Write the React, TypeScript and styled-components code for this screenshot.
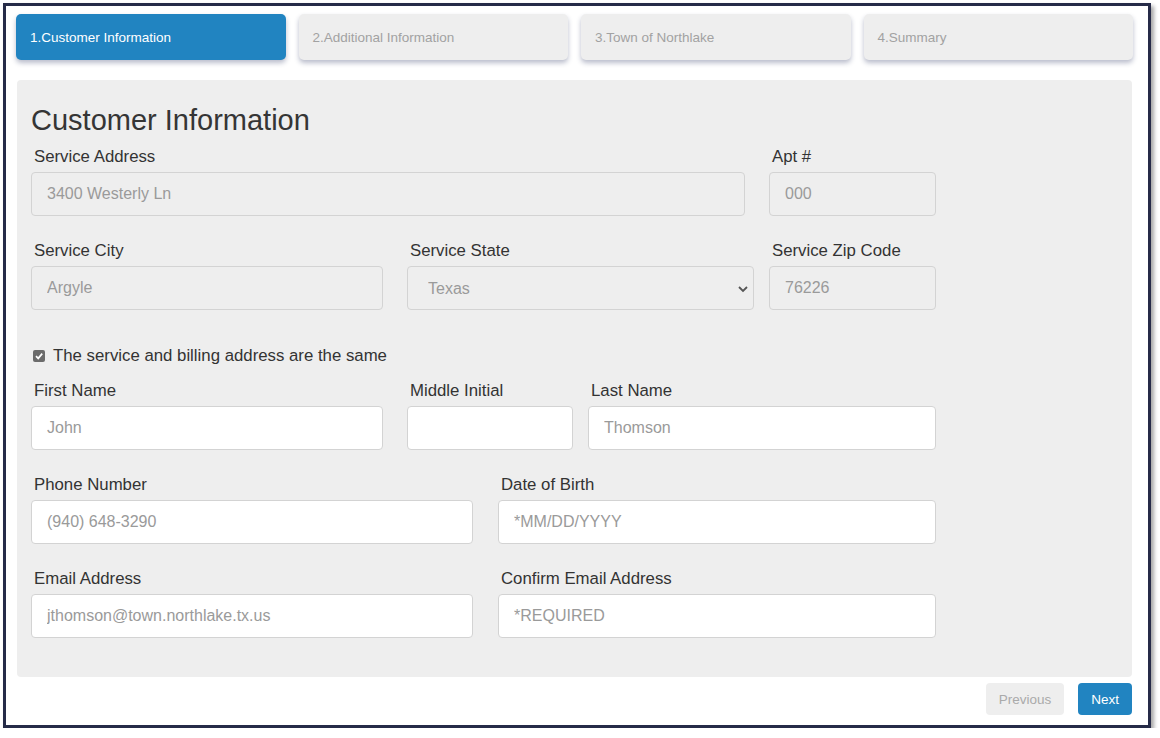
import React from "react";
import styled, { createGlobalStyle } from "styled-components";

const Global = createGlobalStyle`
  html, body { margin: 0; padding: 0; background: #ffffff; }
  body { font-family: "Liberation Sans", Arial, sans-serif; }
  * { box-sizing: border-box; }
`;

const Frame = styled.div`
  position: relative;
  margin: 3px 0 0 3px;
  width: 1148px;
  height: 725px;
  border: 3px solid #262b48;
  background: #ffffff;
  box-shadow: 3px 3px 4px rgba(0, 0, 0, 0.35);
  padding: 8px 15px 0 10px;
  display: flex;
  flex-direction: column;
`;

const Tabs = styled.div`
  display: grid;
  grid-template-columns: repeat(4, 1fr);
  column-gap: 13px;
`;

const Tab = styled.div<{ $active?: boolean }>`
  height: 46px;
  border-radius: 5px;
  display: flex;
  align-items: center;
  padding-left: 14px;
  font-size: 13.5px;
  background: ${(p) => (p.$active ? "#2184c1" : "#eeeeee")};
  color: ${(p) => (p.$active ? "#ffffff" : "#a2a2a2")};
  box-shadow: 0 3px 5px rgba(40, 50, 95, 0.32);
`;

const Panel = styled.div`
  margin: 20px 1px 0 1px;
  background: #eeeeee;
  border-radius: 4px;
  padding: 24px 14px 39px 14px;
`;

const Heading = styled.h2`
  margin: 0 0 11px 0;
  font-weight: 400;
  font-size: 29px;
  line-height: 32px;
  color: #353535;
`;

const Row = styled.div<{ $mt?: number }>`
  display: flex;
  align-items: flex-start;
  margin-top: ${(p) => p.$mt ?? 0}px;
`;

const Field = styled.div<{ $w: number; $ml?: number }>`
  width: ${(p) => p.$w}px;
  margin-left: ${(p) => p.$ml ?? 0}px;
  display: flex;
  flex-direction: column;
  flex-shrink: 0;
`;

const Label = styled.label`
  display: block;
  font-size: 16.8px;
  line-height: 20px;
  color: #333333;
  padding-left: 3px;
  margin-bottom: 5px;
`;

const Input = styled.input<{ $disabled?: boolean }>`
  width: 100%;
  height: 44px;
  border: 1px solid #d3d3d3;
  border-radius: 4px;
  padding: 0 15px;
  font-family: "Liberation Sans", Arial, sans-serif;
  font-size: 16px;
  color: #9a9a9a;
  background: ${(p) => (p.$disabled ? "#eeeeee" : "#ffffff")};
  outline: none;
  &::placeholder { color: #9a9a9a; opacity: 1; }
`;

const SelectWrap = styled.div`
  position: relative;
  width: 100%;
`;

const Select = styled.select`
  width: 100%;
  height: 44px;
  border: 1px solid #d3d3d3;
  border-radius: 4px;
  padding: 0 0 0 20px;
  font-family: "Liberation Sans", Arial, sans-serif;
  font-size: 16px;
  color: #9a9a9a;
  background: #eeeeee;
  appearance: none;
  -webkit-appearance: none;
  outline: none;
`;

const Chevron = styled.svg`
  position: absolute;
  right: 4px;
  top: 18px;
  pointer-events: none;
`;

const CheckRow = styled.div`
  display: flex;
  align-items: center;
  height: 20px;
  margin-top: 36px;
  padding-left: 2px;
  font-size: 16.8px;
  color: #333333;
`;

const CheckBox = styled.span`
  width: 12px;
  height: 12px;
  border-radius: 2px;
  background: #6b6b6b;
  display: inline-flex;
  align-items: center;
  justify-content: center;
  margin-right: 8px;
`;

const Footer = styled.div`
  display: flex;
  justify-content: flex-end;
  gap: 14px;
  margin: 6px 1px 0 0;
`;

const Button = styled.button<{ $primary?: boolean }>`
  height: 32px;
  padding: 0 13px;
  border: none;
  border-radius: 4px;
  font-family: "Liberation Sans", Arial, sans-serif;
  font-size: 13.5px;
  background: ${(p) => (p.$primary ? "#2184c1" : "#eeeeee")};
  color: ${(p) => (p.$primary ? "#ffffff" : "#aaaaaa")};
  cursor: pointer;
`;

export default function App() {
  return (
    <>
      <Global />
      <Frame>
        <Tabs>
          <Tab $active>1.Customer Information</Tab>
          <Tab>2.Additional Information</Tab>
          <Tab>3.Town of Northlake</Tab>
          <Tab>4.Summary</Tab>
        </Tabs>
        <Panel>
          <Heading>Customer Information</Heading>
          <Row>
            <Field $w={714}>
              <Label>Service Address</Label>
              <Input $disabled readOnly value="3400 Westerly Ln" />
            </Field>
            <Field $w={167} $ml={24}>
              <Label>Apt #</Label>
              <Input $disabled readOnly value="000" />
            </Field>
          </Row>
          <Row $mt={25}>
            <Field $w={352}>
              <Label>Service City</Label>
              <Input $disabled readOnly value="Argyle" />
            </Field>
            <Field $w={347} $ml={24}>
              <Label>Service State</Label>
              <SelectWrap>
                <Select defaultValue="Texas">
                  <option>Texas</option>
                </Select>
                <Chevron width="14" height="10" viewBox="0 0 14 10">
                  <path d="M3 3 L7 7 L11 3" fill="none" stroke="#555" strokeWidth="1.8" />
                </Chevron>
              </SelectWrap>
            </Field>
            <Field $w={167} $ml={15}>
              <Label>Service Zip Code</Label>
              <Input $disabled readOnly value="76226" />
            </Field>
          </Row>
          <CheckRow>
            <CheckBox>
              <svg width="10" height="10" viewBox="0 0 10 10">
                <path d="M2 5.2 L4.2 7.4 L8.2 2.6" fill="none" stroke="#fff" strokeWidth="1.7" />
              </svg>
            </CheckBox>
            The service and billing address are the same
          </CheckRow>
          <Row $mt={15}>
            <Field $w={352}>
              <Label>First Name</Label>
              <Input placeholder="John" />
            </Field>
            <Field $w={166} $ml={24}>
              <Label>Middle Initial</Label>
              <Input />
            </Field>
            <Field $w={348} $ml={15}>
              <Label>Last Name</Label>
              <Input placeholder="Thomson" />
            </Field>
          </Row>
          <Row $mt={25}>
            <Field $w={442}>
              <Label>Phone Number</Label>
              <Input placeholder="(940) 648-3290" />
            </Field>
            <Field $w={438} $ml={25}>
              <Label>Date of Birth</Label>
              <Input placeholder="*MM/DD/YYYY" />
            </Field>
          </Row>
          <Row $mt={25}>
            <Field $w={442}>
              <Label>Email Address</Label>
              <Input placeholder="jthomson@town.northlake.tx.us" />
            </Field>
            <Field $w={438} $ml={25}>
              <Label>Confirm Email Address</Label>
              <Input placeholder="*REQUIRED" />
            </Field>
          </Row>
        </Panel>
        <Footer>
          <Button>Previous</Button>
          <Button $primary>Next</Button>
        </Footer>
      </Frame>
    </>
  );
}
